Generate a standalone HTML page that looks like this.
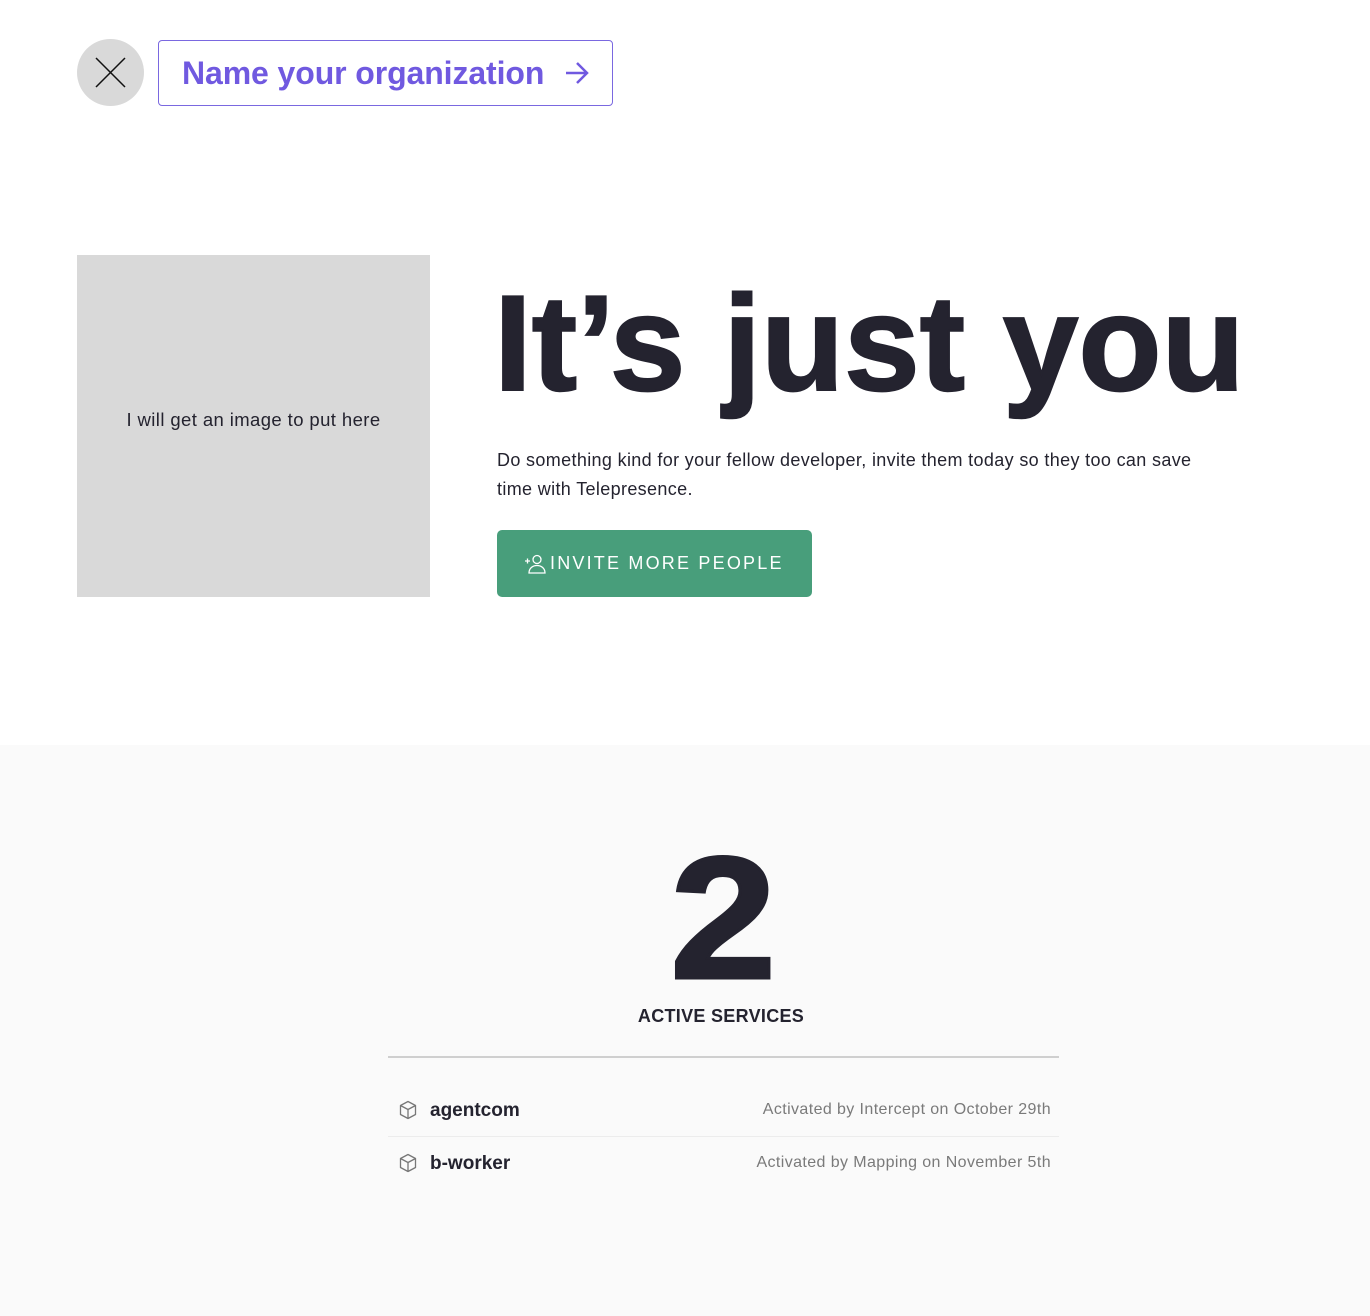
<!DOCTYPE html>
<html><head><meta charset="utf-8"><style>
*{margin:0;padding:0;box-sizing:border-box}
body{width:1370px;height:1316px;background:#fff;font-family:"Liberation Sans",sans-serif;color:#24232f;position:relative;overflow:hidden}
.abs{position:absolute}
.close{left:77px;top:39px;width:67px;height:67px;border-radius:50%;background:#d9d9d9}
.org{left:158px;top:40px;width:455px;height:66px;border:1.5px solid #7a68e0;border-radius:4px;color:#7059e0;font-weight:bold;font-size:32px;line-height:64px;padding-left:23px;letter-spacing:-0.1px}
.img{left:77px;top:255px;width:353px;height:342px;background:#d9d9d9;font-size:18.5px;letter-spacing:.4px;color:#24232f;text-align:center;line-height:330px}
h1{position:absolute;left:494px;top:268px;font-size:136px;font-weight:bold;letter-spacing:0;line-height:150px;white-space:nowrap;-webkit-text-stroke:2px #24232f}
.p{left:497px;top:446px;width:748px;font-size:18px;line-height:29px;letter-spacing:.35px}
.btn{left:497px;top:530px;width:315px;height:67px;background:#489e7b;border-radius:5px;color:#fff;font-size:18px;letter-spacing:2.2px;line-height:67px;padding-left:53px}
.bottom{left:0;top:745px;width:1370px;height:571px;background:#fafafa}
.two{left:670px;width:106px;top:828px;text-align:left;font-size:174px;font-weight:bold;line-height:180px;transform:scaleX(1.1);transform-origin:left;-webkit-text-stroke:3px #24232f}
.as{left:0;width:1442px;top:1006px;text-align:center;font-size:18px;font-weight:bold;letter-spacing:.3px}
.line{left:388px;top:1056px;width:671px;height:2px;background:#cfcfcf}
.row{left:388px;width:671px;height:53px;font-size:19px;font-weight:bold}
.row .n{position:absolute;left:42px;top:1px;line-height:53px}
.row .d{position:absolute;right:8px;top:0;line-height:53px;font-weight:normal;font-size:16px;letter-spacing:.4px;color:#7a7a7a}
.row svg{position:absolute;left:10px;top:17px}
</style></head><body>
<div class="abs close"><svg width="67" height="67"><path d="M19 19L48 48M48 19L19 48" stroke="#111" stroke-width="1.5"/></svg></div>
<div class="abs org">Name your organization<svg style="position:absolute;left:405px;top:20px" width="26" height="24"><path d="M2 12H23M13 2L23 12L13 22" stroke="#7059e0" stroke-width="2.5" fill="none"/></svg></div>
<div class="abs img">I will get an image to put here</div>
<h1>It’s just you</h1>
<div class="abs p">Do something kind for your fellow developer, invite them today so they too can save<br>time with Telepresence.</div>
<div class="abs btn"><svg style="position:absolute;left:27px;top:24px" width="22" height="20"><path d="M1 7H6M3.5 4.5V9.5" stroke="#fff" stroke-width="1.3"/><circle cx="13" cy="5.5" r="4" stroke="#fff" stroke-width="1.3" fill="none"/><path d="M5 19C5 14 9 11.5 13 11.5S21 14 21 19Z" stroke="#fff" stroke-width="1.3" fill="none"/></svg>INVITE MORE PEOPLE</div>
<div class="abs bottom"></div>
<div class="abs two">2</div>
<div class="abs as">ACTIVE SERVICES</div>
<div class="abs line"></div>
<div class="abs row" style="top:1083px"><svg width="20" height="20" viewBox="0 0 20 20"><path d="M10 1.5L17.5 5.5V14.5L10 18.5L2.5 14.5V5.5ZM2.5 5.5L10 9.5L17.5 5.5M10 9.5V18.5" stroke="#777" stroke-width="1.3" fill="none" stroke-linejoin="round"/></svg><span class="n">agentcom</span><span class="d">Activated by Intercept on October 29th</span></div>
<div class="abs" style="left:388px;top:1136px;width:671px;height:1px;background:#ececec"></div>
<div class="abs row" style="top:1136px"><svg width="20" height="20" viewBox="0 0 20 20"><path d="M10 1.5L17.5 5.5V14.5L10 18.5L2.5 14.5V5.5ZM2.5 5.5L10 9.5L17.5 5.5M10 9.5V18.5" stroke="#777" stroke-width="1.3" fill="none" stroke-linejoin="round"/></svg><span class="n">b-worker</span><span class="d">Activated by Mapping on November 5th</span></div>
</body></html>
